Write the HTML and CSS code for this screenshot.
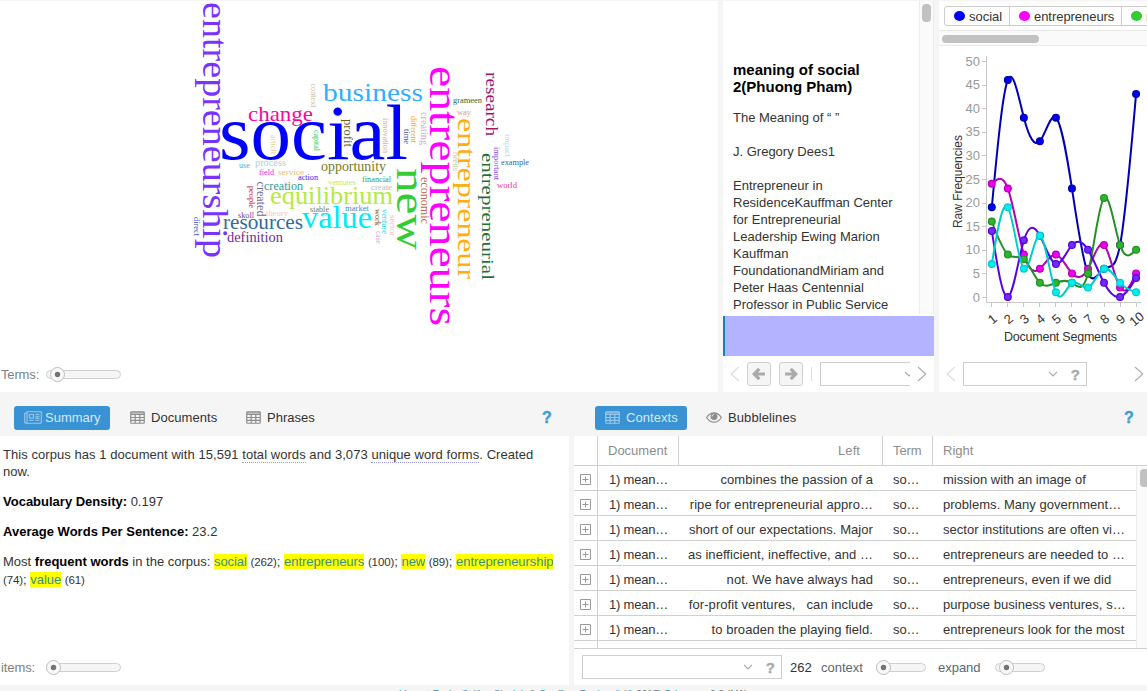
FILE: index.html
```html
<!DOCTYPE html>
<html lang="en">
<head>
<meta charset="utf-8">
<title>Voyant Tools</title>
<link rel="stylesheet" href="styles.css">
</head>
<body>
<svg class="defs" width="0" height="0">
  <defs>
    <symbol id="table" viewBox="0 0 15 13"><path d="M1.5 .75h12q.75 0 .75.75v10q0 .75-.75.75h-12q-.75 0-.75-.75v-10q0-.75.75-.75zM.75 3.5h13.5M.75 6.5h13.5M.75 9.4h13.5M5.2 3v9.2M9.8 3v9.2M1 2h13" fill="none" stroke="currentColor" stroke-width="1.2"/></symbol>
    <symbol id="news" viewBox="0 0 18 13"><path d="M3 .75h14.3v10.5q0 1-1 1H2q-1.3 0-1.3-1.3V2.2H3zM3 2.2v8.5q0 1.4-1.2 1.4M5.3 3.5h4.2v3.5H5.3zM11.3 3.3h4.2M11.3 5.2h4.2M11.3 7.1h4.2M5 9.3h4.8M11.3 9.3h4.2" fill="none" stroke="currentColor" stroke-width="1.1"/></symbol>
    <symbol id="eye" viewBox="0 0 16 11"><path d="M.6 5.5Q3.6.8 8 .8t7.4 4.7Q12.4 10.2 8 10.2T.6 5.5z" fill="none" stroke="currentColor" stroke-width="1.2"/><circle cx="8" cy="4.6" r="3.5" fill="currentColor"/><path d="M6 4.5Q6 2.7 7.8 2.6" fill="none" stroke="#f5f5f5" stroke-width=".8"/></symbol>
    <symbol id="arrow" viewBox="0 0 14 14"><path d="M13 7H3M7.3 1.8 2.2 7l5.1 5.2" fill="none" stroke="currentColor" stroke-width="3.2"/></symbol>
    <symbol id="down" viewBox="0 0 10 6"><path d="M1 .8 5 4.8 9 .8" fill="none" stroke="currentColor" stroke-width="1.2"/></symbol>
    <symbol id="prev" viewBox="0 0 10 16"><path d="M9 1 1.2 8 9 15" fill="none" stroke="currentColor" stroke-width="1.1"/></symbol>
    <symbol id="plus" viewBox="0 0 11 11"><path d="M.5.5h10v10H.5zM2.5 5.5h6M5.5 2.5v6" fill="none" stroke="currentColor"/></symbol>
  </defs>
</svg>
<div class="app">
  <div class="top">
    <section class="cirrus">
      <svg id="cloud" class="cloud" width="718" height="355" viewBox="0 1 718 355"></svg>
      <div class="toolbar terms"><span>Terms:</span><div class="slider wide"><i class="thumb at4"></i></div></div>
    </section>
    <section class="reader">
      <div class="reader-main">
        <article class="doc">
          <h3>meaning of social 2(Phuong Pham)</h3>
          <p>The Meaning of “ ”</p>
          <p>J. Gregory Dees1</p>
          <p>Entrepreneur in<br>ResidenceKauffman Center<br>for Entrepreneurial<br>Leadership Ewing Marion<br>Kauffman<br>FoundationandMiriam and<br>Peter Haas Centennial<br>Professor in Public Service</p>
        </article>
        <div class="vscroll"><i></i></div>
      </div>
      <div class="segment"></div>
      <div class="toolbar reader-bar">
        <svg class="chev faint"><use href="#prev"/></svg>
        <button class="nav first"><svg width="14" height="14"><use href="#arrow"/></svg></button>
        <button class="nav"><svg class="flip" width="14" height="14"><use href="#arrow"/></svg></button>
        <span class="sep"></span>
        <div class="field cut"><svg class="caret"><use href="#down"/></svg></div>
        <svg class="chev flip"><use href="#prev"/></svg>
      </div>
    </section>
    <section class="trends">
      <div class="legend"><div class="keys">
        <span class="key k1"><i class="blue"></i>social</span><span class="key k2"><i class="pink"></i>entrepreneurs</span><span class="key k3"><i class="green"></i>new</span>
      </div></div>
      <div class="hscroll"><i></i></div>
      <svg id="chart" width="208" height="310" viewBox="939 46 208 310"></svg>
      <div class="toolbar trends-bar">
        <svg class="chev faint"><use href="#prev"/></svg>
        <div class="field query"><svg class="caret"><use href="#down"/></svg><b>?</b></div>
        <svg class="chev flip end"><use href="#prev"/></svg>
      </div>
    </section>
  </div>
  <div class="bottom">
    <section class="summary">
      <nav class="tabs">
        <a class="tab active news"><svg width="18" height="13"><use href="#news"/></svg><span>Summary</span></a>
        <a class="tab t-docs"><svg width="15" height="13"><use href="#table"/></svg><span>Documents</span></a>
        <a class="tab t-phr"><svg width="15" height="13"><use href="#table"/></svg><span>Phrases</span></a>
        <b class="help">?</b>
      </nav>
      <div class="corpus">
        <p class="line1">This corpus has 1 document with 15,591 <u>total words</u> and 3,073 <u>unique word forms</u>. Created<br>now.</p>
        <p class="dens"><b>Vocabulary Density:</b> 0.197</p>
        <p class="avg"><b>Average Words Per Sentence:</b> 23.2</p>
        <p class="freq">Most <b>frequent words</b> in the corpus: <mark>social</mark> <small>(262)</small>; <mark>entrepreneurs</mark> <small>(100)</small>; <mark>new</mark> <small>(89)</small>; <mark>entrepreneurship</mark><br><small>(74)</small>; <mark>value</mark> <small>(61)</small></p>
      </div>
      <div class="toolbar items"><span>items:</span><div class="slider wide"><i class="thumb at0"></i></div></div>
    </section>
    <section class="contexts">
      <nav class="tabs">
        <a class="tab active ctx"><svg width="15" height="13"><use href="#table"/></svg><span>Contexts</span></a>
        <a class="tab t-bub"><svg width="16" height="11"><use href="#eye"/></svg><span>Bubblelines</span></a>
        <b class="help right">?</b>
      </nav>
      <div class="head row"><span class="c0"></span><span class="c1">Document</span><span class="c2">Left</span><span class="c3">Term</span><span class="c4">Right</span></div>
      <div class="grid">
        <div class="rows">
          <div class="row"><span class="c0"><svg><use href="#plus"/></svg></span><span class="c1">1) mean…</span><span class="c2">combines the passion of a</span><span class="c3">so…</span><span class="c4">mission with an image of</span></div>
          <div class="row"><span class="c0"><svg><use href="#plus"/></svg></span><span class="c1">1) mean…</span><span class="c2">ripe for entrepreneurial appro…</span><span class="c3">so…</span><span class="c4">problems. Many government…</span></div>
          <div class="row"><span class="c0"><svg><use href="#plus"/></svg></span><span class="c1">1) mean…</span><span class="c2">short of our expectations. Major</span><span class="c3">so…</span><span class="c4">sector institutions are often vi…</span></div>
          <div class="row"><span class="c0"><svg><use href="#plus"/></svg></span><span class="c1">1) mean…</span><span class="c2">as inefficient, ineffective, and …</span><span class="c3">so…</span><span class="c4">entrepreneurs are needed to …</span></div>
          <div class="row"><span class="c0"><svg><use href="#plus"/></svg></span><span class="c1">1) mean…</span><span class="c2">not. We have always had</span><span class="c3">so…</span><span class="c4">entrepreneurs, even if we did</span></div>
          <div class="row"><span class="c0"><svg><use href="#plus"/></svg></span><span class="c1">1) mean…</span><span class="c2">for-profit ventures, &nbsp; can include</span><span class="c3">so…</span><span class="c4">purpose business ventures, s…</span></div>
          <div class="row"><span class="c0"><svg><use href="#plus"/></svg></span><span class="c1">1) mean…</span><span class="c2">to broaden the playing field.</span><span class="c3">so…</span><span class="c4">entrepreneurs look for the most</span></div>
          <div class="row"><span class="c0"></span></div>
        </div>
        <div class="vscroll grid-scroll"><i></i></div>
      </div>
      <div class="toolbar ctx-bar">
        <div class="field search"><svg class="caret"><use href="#down"/></svg><b>?</b></div>
        <span class="count">262</span>
        <span class="label">context</span><div class="slider small"><i class="thumb at0"></i></div>
        <span class="label expand">expand</span><div class="slider small last"><i class="thumb at4"></i></div>
      </div>
    </section>
  </div>
  <footer><a>Voyant Tools</a>, <a>Stéfan Sinclair</a> &amp; <a>Geoffrey Rockwell</a> (<a>©</a> 2017) <a>Privacy</a> v. 2.2 (M1)</footer>
</div>
<script src="app.js"></script>
</body>
</html>
```
FILE: styles.css
```css
* { box-sizing: border-box; }
body { margin: 0; background: #f5f5f5; font: 13px/17px "Liberation Sans", Arial, sans-serif; color: #333; }
svg { display: block; flex: none; }
.defs { position: absolute; }
.app { width: 1147px; height: 691px; overflow: hidden; display: flex; flex-direction: column; padding-top: 1px; }
.top { display: flex; gap: 5px; height: 391px; flex: none; }
section { background: #fff; display: flex; flex-direction: column; flex: none; overflow: hidden; }
.cirrus { width: 718px; }
.cloud { font-family: "Liberation Serif", serif; }
.toolbar { display: flex; align-items: center; height: 36px; flex: none; background: #fff; }
.terms, .items { color: #808080; }
.terms { padding-left: 1px; }
.terms span { width: 45px; letter-spacing: -.15px; }
.items { padding-left: 1px; }
.items span { width: 45px; letter-spacing: -.1px; }
.slider { height: 9px; border: 1px solid #d0d0d0; border-radius: 5px; background: #f5f5f5; display: flex; align-items: center; flex: none; }
.wide { width: 75px; }
.small { width: 50px; margin-left: 13px; }
.thumb { width: 15px; height: 15px; flex: none; border: 1px solid #bdbdbd; border-radius: 50%; background: radial-gradient(circle, #757575 0 2.3px, #f8f8f8 3.2px); }
.at4 { margin-left: 3px; }
.at0 { margin-left: -1px; }

.reader { width: 211px; }
.reader-main { height: 313px; display: flex; overflow: hidden; }
.doc { width: 196px; padding: 60px 0 0 10px; white-space: nowrap; flex: none; }
.doc h3 { margin: 0 0 14px; font-size: 15px; line-height: 17px; color: #000; white-space: normal; width: 155px; }
.doc p { margin: 0 0 17px; }
.vscroll { width: 15px; flex: none; border: solid #ececec; border-width: 0 1px; background: #fafafa; padding: 3px 2px; }
.vscroll i { display: block; width: 9px; height: 18px; border-radius: 4px; background: #c1c1c1; }
.segment { height: 40px; margin-top: 2px; border-left: 2px solid #157fcc; background: #b3b3ff; flex: none; }
.reader-bar { padding-left: 7px; }
.chev { width: 10px; height: 16px; color: #aaa; }
.faint { color: #ddd; }
.flip { transform: scaleX(-1); }
.nav { width: 24px; height: 24px; padding: 0; border: 1px solid #d0d0d0; border-radius: 3px; background: #f5f5f5; color: #aaa; display: flex; align-items: center; justify-content: center; margin-left: 8px; }
.nav.first { margin-left: 7px; }
.sep { width: 1px; height: 14px; background: #ddd; margin: 0 8px; }
.field { height: 24px; border: 1px solid #cecece; background: #fff; display: flex; align-items: center; justify-content: flex-end; flex: none; color: #aaa; }
.field b { font-size: 15px; -webkit-text-stroke: .4px #aaa; }
.caret { width: 10px; height: 6px; }
.cut { width: 90px; border-right: 0; overflow: hidden; margin-right: 7px; }
.cut .caret { margin-right: -4px; }

.trends { width: 208px; }
.legend { height: 30px; border-bottom: 1px solid #e6e6e6; padding: 5px 0 0 5px; flex: none; }
.keys { display: flex; width: 250px; height: 20px; border: 1px solid #ccc; border-radius: 3px; }
.key { display: flex; align-items: center; gap: 4px; padding-left: 9px; border-right: 1px solid #ccc; flex: none; }
.key i { width: 11px; height: 10px; border-radius: 50%; }
.k1 { width: 65px; }
.k2 { width: 112px; letter-spacing: -.05px; }
.k3 { width: 60px; }
.blue { background: #00f; }
.pink { background: #f0f; }
.green { background: #3c3; }
.hscroll { height: 15px; border-bottom: 1px solid #ebebeb; background: #fafafa; padding: 4px 3px; flex: none; }
.hscroll i { display: block; width: 97px; height: 8px; border-radius: 4px; background: #c1c1c1; }
#chart { font-family: "Liberation Sans", sans-serif; }
.trends-bar { padding-left: 7px; }
.query { width: 124px; margin-left: 7px; gap: 13px; padding-right: 6px; }
.end { margin-left: 47px; }

.bottom { display: flex; gap: 5px; height: 293px; flex: none; }
.summary { width: 569px; }
.contexts { width: 573px; }
.tabs { height: 44px; background: #f5f5f5; display: flex; align-items: center; padding: 7px 0 0 14px; flex: none; }
.tab { display: flex; align-items: center; height: 24px; white-space: nowrap; }
.tab svg { color: #8c8c8c; margin-right: 6px; }
.active { background: #3892d3; border-radius: 3px; color: #d7e9f6; }
.active svg { color: #9bc8e9; }
.news { width: 96px; padding-left: 10px; }
.news svg { margin-right: 3px; }
.t-docs { width: 117px; padding-left: 20px; letter-spacing: .05px; }
.t-phr { width: 106px; padding-left: 19px; }
.help { color: #3e9bd8; font-size: 16px; margin-left: 209px; -webkit-text-stroke: .4px #3e9bd8; }
.contexts .tabs { padding-left: 21px; }
.ctx { width: 92px; padding-left: 10px; letter-spacing: .05px; }
.t-bub { width: 120px; padding-left: 19px; letter-spacing: .1px; }
.right { margin-left: 317px; }
.corpus { height: 213px; padding: 10px 3px; white-space: nowrap; flex: none; }
.corpus p { margin: 0 0 13px; }
.corpus b { color: #000; }
.corpus .line1 { letter-spacing: .056px; }
.corpus .avg b { letter-spacing: .02px; }
.corpus u { text-decoration: none; border-bottom: 1px dotted #99e; }
.freq { line-height: 18px; }
.freq small { font-size: 11.5px; letter-spacing: -.1px; }
mark { background: #ff0; color: #3a8f88; letter-spacing: -.06px; }
.row { display: flex; height: 25px; border-bottom: 1px solid #d0d0d0; line-height: 27px; white-space: nowrap; flex: none; }
.row span { flex: none; overflow: hidden; }
.c0 { width: 24px; border-right: 1px solid #d0d0d0; padding: 8px 0 0 6px; }
.c0 svg { width: 11px; height: 11px; color: #999; }
.c1 { width: 81px; padding-left: 11px; letter-spacing: -.2px; }
.c2 { width: 204px; padding-right: 10px; text-align: right; letter-spacing: .06px; }
.c3 { width: 50px; padding-left: 10px; letter-spacing: -.1px; }
.c4 { width: 204px; padding-left: 10px; letter-spacing: .02px; }
.head { height: 30px; line-height: 30px; color: #8c8c8c; }
.head .c1, .head .c2, .head .c3 { border-right: 1px solid #d0d0d0; }
.head .c1 { padding-left: 10px; letter-spacing: 0; }
.head .c2 { padding-right: 22px; }
.grid { height: 182px; display: flex; overflow: hidden; flex: none; }
.rows { width: 562px; }
.grid-scroll { border-right: 0; padding: 3px 0 0 3px; }
.ctx-bar { border-top: 1px solid #d0d0d0; height: 37px; padding-left: 8px; }
.search { width: 200px; gap: 13px; padding-right: 6px; }
.count { margin-left: 8px; width: 31px; }
.label { color: #5a6773; }
.expand { margin-left: 12px; }
.last { margin-left: 14px; }
footer { font-size: 10px; line-height: 13px; text-align: center; color: #777; padding-top: 3px; white-space: nowrap; letter-spacing: .01px; }
footer a { color: #3892d3; }
```
FILE: app.js
```js
const NS = "http://www.w3.org/2000/svg";
function add(parent, name, attrs, text) {
  const el = document.createElementNS(NS, name);
  for (const key in attrs) el.setAttribute(key, attrs[key]);
  if (text !== undefined) el.textContent = text;
  parent.appendChild(el);
  return el;
}

// word, x, baseline, length, size, colour
const across = [
  ["social", 219, 159, 189, 79, "#0000ff"],
  ["business", 323, 101, 100, 26, "#33adff"],
  ["change", 248, 121, 65, 22, "#f5099c"],
  ["equilibrium", 270, 204, 123, 25, "#b5ea40"],
  ["value", 302, 228, 70, 31, "#00ebf5"],
  ["resources", 223, 229, 80, 20, "#336a9c"],
  ["definition", 227, 242, 56, 14, "#6d2b9c"],
  ["creation", 264, 190, 39, 12, "#2c9a94"],
  ["opportunity", 321, 170.5, 65, 14, "#79791b"],
  ["process", 255, 166, 31, 11, "#aed0e0"],
  ["use", 239, 168, 11, 8, "#52b2ae"],
  ["field", 259, 175, 15, 8.5, "#f020e8"],
  ["service", 278, 175, 26, 9, "#e6bd78"],
  ["action", 298, 180, 20, 9, "#2828e8"],
  ["ventures", 328, 185, 28, 8.5, "#bce96c"],
  ["financial", 362, 182, 29, 8.5, "#3a9a4e"],
  ["create", 371, 189.5, 21, 9, "#b0c2b4"],
  ["market", 345, 211, 24, 8, "#3d8dcb"],
  ["stable", 310, 212, 19, 8.5, "#7f7a33"],
  ["skoll", 238, 218, 16, 9, "#7b3f93"],
  ["theory", 266, 216, 22, 8.5, "#f7c0c0"],
  ["grameen", 453, 103, 29, 8.5, "#286c3c"],
  ["way", 457, 114.5, 14, 9, "#d79a84"],
  ["example", 501, 165, 28, 8.5, "#3566a0"],
  ["world", 497, 187.5, 20, 8.5, "#f030a0"]
];
const down = [
  ["entrepreneurship", 203, 2, 256, 35, "#7a33ff"],
  ["entrepreneurs", 430, 66, 260, 43, "#ff00ff"],
  ["new", 397, 168, 82, 43, "#33cc33"],
  ["entrepreneur", 458, 118, 161, 26, "#ffab12"],
  ["entrepreneurial", 481.5, 153, 127, 17, "#1f7038"],
  ["research", 485.5, 72, 64, 17, "#a61468"],
  ["profit", 343.5, 119, 28, 13, "#745a13"],
  ["capital", 313.5, 130, 21, 9, "#3dcc55"],
  ["article", 271, 135, 20, 9, "#e6cf98"],
  ["context", 311, 83.5, 24, 8.5, "#cdb9a0"],
  ["created", 257, 181.5, 35, 12, "#6d6a9b"],
  ["people", 248.5, 186, 22, 8.5, "#a82060"],
  ["direct", 193.5, 217, 19, 8.5, "#4048c0"],
  ["innovation", 383, 118, 35, 8.5, "#c8b098"],
  ["time", 404, 129, 15, 8.5, "#50508e"],
  ["different", 411, 116, 27, 8.5, "#f3a735"],
  ["creating", 421, 112, 33, 10, "#ccabcf"],
  ["economic", 420.5, 177, 47, 12, "#bd6555"],
  ["work", 374.5, 209, 17, 8.5, "#6b4b20"],
  ["venture", 382, 209, 25, 8.5, "#19d6e6"],
  ["case", 376, 231, 13, 9, "#cfa9d8"],
  ["sector", 390, 215, 21, 8.5, "#f8b8b0"],
  ["needs", 452.5, 152, 19, 9, "#b7c7a8"],
  ["impact", 505, 134, 23, 8.5, "#bcd8e6"],
  ["important", 494, 147, 33, 8.5, "#8a3fe0"]
];
const cloud = document.getElementById("cloud");
function word([text, x, y, length, size, fill], angle) {
  add(cloud, "text", {
    transform: `translate(${x} ${y}) rotate(${angle})`,
    "font-size": size, fill, textLength: length, lengthAdjust: "spacingAndGlyphs"
  }, text);
}
across.forEach(w => word(w, 0));
down.forEach(w => word(w, 90));

const chart = document.getElementById("chart");
const px = i => 991.8 + i * 16.03;
const py = v => 297 - v * 4.72;
add(chart, "path", { d: "M986.5 56V302.5H1141", fill: "none", stroke: "#c8c8c8" });
for (let v = 0; v <= 50; v += 5) {
  add(chart, "path", { d: `M982 ${Math.round(py(v)) + .5}H986`, stroke: "#c8c8c8" });
  add(chart, "text", { x: 980, y: py(v) + 4.5, "font-size": 13, fill: "#999", "text-anchor": "end" }, v);
}
for (let i = 0; i < 10; i++) {
  add(chart, "path", { d: `M${Math.floor(px(i)) + .5} 303v4`, stroke: "#c8c8c8" });
  add(chart, "text", {
    transform: `translate(${px(i) + .5} 319) rotate(-40)`,
    y: 4.5, "font-size": 13, fill: "#333", "text-anchor": "middle"
  }, i + 1);
}
add(chart, "text", { x: 1004, y: 341, "font-size": 12.5, fill: "#333", textLength: 113 }, "Document Segments");
add(chart, "text", { transform: "translate(962 228) rotate(-90)", "font-size": 12, fill: "#333", textLength: 93 }, "Raw Frequencies");

// Slopes of a natural cubic spline through evenly spaced values
function slopes(p) {
  const n = p.length, c = [], d = [], m = [];
  for (let i = 0; i < n; i++) {
    const a = i ? 1 : 0, b = i && i < n - 1 ? 4 : 2;
    const r = 3 * (p[Math.min(n - 1, i + 1)] - p[Math.max(0, i - 1)]);
    const k = b - (i ? a * c[i - 1] : 0);
    c[i] = 1 / k;
    d[i] = (r - (i ? a * d[i - 1] : 0)) / k;
  }
  for (let i = n - 1; i >= 0; i--) m[i] = d[i] - (i < n - 1 ? c[i] * m[i + 1] : 0);
  return m;
}
const series = [
  ["#0000b3", "#0000ee", [19, 46, 38, 33, 38, 23, 5, 6, 11, 43]],
  ["#b300b3", "#ee00ee", [24, 23, 9, 6, 9, 5, 6, 11, 2, 5]],
  ["#248f24", "#2db52d", [16, 9, 8, 3, 3, 3, 5, 21, 11, 10]],
  ["#5a00e6", "#6f2cf5", [14, 0, 12, 13, 7, 11, 10, 3, 0, 4]],
  ["#00cccc", "#00eeee", [7, 19, 6, 13, 1, 3, 2, 6, 3, 1]]
];
for (const [line, dot, values] of series) {
  const m = slopes(values);
  let d = `M${px(0)} ${py(values[0])}`;
  for (let i = 0; i < 9; i++) {
    d += `C${px(i + 1 / 3)} ${py(values[i] + m[i] / 3)} ${px(i + 2 / 3)} ${py(values[i + 1] - m[i + 1] / 3)} ${px(i + 1)} ${py(values[i + 1])}`;
  }
  add(chart, "path", { d, fill: "none", stroke: line, "stroke-width": 2 });
  values.forEach((v, i) => add(chart, "circle", { cx: px(i), cy: py(v), r: 3.4, fill: dot, stroke: line, "stroke-width": 1.2 }));
}
```
